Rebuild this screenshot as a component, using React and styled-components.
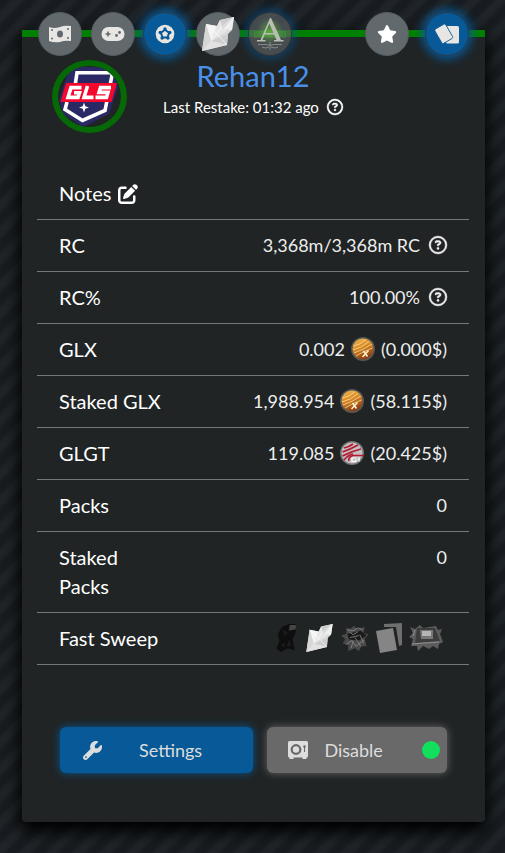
import styled, { createGlobalStyle, css } from 'styled-components'
import {
  FaWrench,
  FaStar,
  FaPenToSquare,
  FaRegCircleQuestion,
} from 'react-icons/fa6'

const GlobalStyle = createGlobalStyle`
  * {
    box-sizing: border-box;
  }

  body {
    margin: 0;
    min-height: 100vh;
    font-family: Lato, 'Liberation Sans', sans-serif;
    color: #ffffff;
    background: repeating-linear-gradient(
      135deg,
      #181c20 0px,
      #181c20 6px,
      #1f2428 10px,
      #1f2428 15px,
      #181c20 19px
    );
  }
`

const Page = styled.main`
  padding: 30px 20px 31px 22px;
`

const Card = styled.section`
  padding: 0 16px 49px 15px;
  border-top: 7px solid #008000;
  border-radius: 0 0 4px 4px;
  background: #202425;
  box-shadow: 0 8px 16px 2px #000000;
`

const Toolbar = styled.nav`
  display: flex;
  justify-content: space-between;
  margin-top: -25px;
  padding-left: 1px;
`

const ToolGroup = styled.div`
  display: flex;
  justify-content: space-between;
  gap: 8px;
  width: ${({ $width }) => $width};
`

const RoundButton = styled.button`
  display: grid;
  place-items: center;
  width: 44px;
  height: 44px;
  padding: 0;
  border: 1px solid #555c60;
  border-radius: 50%;
  background: #62696d;
  color: #ffffff;

  ${({ $active }) =>
    $active &&
    css`
      border-color: #2b3c4c;
      background: #075997;
      box-shadow: 0 0 10px 3px #075997;
    `}

  ${({ $faded }) =>
    $faded &&
    css`
      border-color: #30383c;
      background: rgba(98, 105, 109, 0.6);
      box-shadow: 0 0 10px 3px rgba(7, 89, 151, 0.6);
    `}
`

const Header = styled.header`
  display: grid;
  grid-template-columns: 1fr auto 1fr;
  margin-top: 4px;
  padding-bottom: 35px;
`

const Avatar = styled.div`
  width: 75px;
  height: 73px;
  margin-left: 15px;
  border: 6px solid #056a05;
  border-radius: 50%;
  overflow: hidden;

  svg {
    display: block;
  }
`

const Profile = styled.div`
  text-align: center;
`

const UserName = styled.h1`
  margin: 0;
  font-size: 29px;
  font-weight: 400;
  line-height: 32px;
  color: #4a90e9;
`

const Restake = styled.p`
  display: flex;
  align-items: center;
  gap: 8px;
  margin: 5px 0 0;
  font-size: 15px;
  line-height: 20px;
`

const HelpIcon = styled(FaRegCircleQuestion)`
  stroke: currentColor;
  stroke-width: 12px;
  overflow: visible;
`

const Stats = styled.table`
  width: 100%;
  border-collapse: separate;
  border-spacing: 0;
  font-size: 20px;
  line-height: 29px;
`

const Label = styled.th`
  width: 128px;
  padding: 11px 0 11px 22px;
  border-bottom: 1px solid #737879;
  font-weight: 400;
  text-align: left;
  vertical-align: top;
`

const Value = styled.td`
  padding: 11px 22px 11px 0;
  border-bottom: 1px solid #737879;
  color: #eeeeee;
  font-size: 18px;
  vertical-align: top;
`

const ValueLine = styled.div`
  display: flex;
  align-items: center;
  justify-content: flex-end;
  gap: ${({ $gap }) => $gap || '5px'};
  height: 28px;
`

const NotesLine = styled.div`
  display: flex;
  align-items: center;
  gap: 7px;
`

const IconButton = styled.button`
  display: flex;
  padding: 0;
  border: 0;
  background: none;
  color: inherit;
`

const SweepItems = styled.div`
  display: flex;
  align-items: center;
  justify-content: space-between;
  width: 168px;
  height: 28px;
  margin: 0 4px 0 auto;
`

const Actions = styled.footer`
  display: grid;
  grid-template-columns: 194fr 180fr;
  gap: 14px;
  margin-top: 62px;
  padding: 0 22px 0 23px;
`

const ActionButton = styled.button`
  display: grid;
  grid-template-columns: ${({ $columns }) => $columns};
  align-items: center;
  height: 46px;
  padding: 0 7px 0 ${({ $indent }) => $indent};
  border: 0;
  border-radius: 6px;
  background: ${({ $color }) => $color};
  box-shadow: 0 0 8px ${({ $color }) => $color};
  color: #dddddd;
  font-family: inherit;
  font-size: 18px;
  text-align: left;
`

const Status = styled.span`
  width: 18px;
  height: 18px;
  border-radius: 50%;
  background: #12df5c;
`

const CashIcon = () => (
  <svg width="22" height="18" viewBox="0 0 22 18">
    <path d="M0 2Q5 4 11 2Q16 0 22 1V16Q16 15 11 17Q5 18 0 16Z" fill="#e8e6e3" />
    <ellipse cx="11" cy="9" rx="3" ry="3.6" fill="#62696d" />
    <g fill="#62696d">
      <circle cx="3" cy="5" r="1" />
      <circle cx="3" cy="13.5" r="1" />
      <circle cx="19" cy="4" r="1" />
      <circle cx="19" cy="13" r="1" />
    </g>
  </svg>
)

const GamepadIcon = () => (
  <svg width="24" height="16" viewBox="0 0 24 16">
    <rect x="0.5" y="1" width="23" height="14" rx="7" fill="#e8e6e3" />
    <path d="M7 5.5v5M4.5 8h5" stroke="#62696d" strokeWidth="1.6" />
    <circle cx="15.5" cy="9.5" r="1.4" fill="#62696d" />
    <circle cx="18.5" cy="6.5" r="1.4" fill="#62696d" />
  </svg>
)

const BallIcon = () => (
  <svg width="20" height="20" viewBox="0 0 20 20">
    <circle cx="10" cy="10" r="9.3" fill="#e8e6e3" />
    <path
      d="M10 5.7l4.1 3-1.6 4.800H7.500L5.900 8.700Z"
      fill="#e8e6e3"
      stroke="#075997"
      strokeWidth="2"
      strokeLinejoin="round"
    />
    <g fill="#075997">
      <circle cx="10" cy="5" r="1.7" />
      <circle cx="14.8" cy="8.500" r="1.7" />
      <circle cx="12.9" cy="14" r="1.7" />
      <circle cx="7.1" cy="14" r="1.7" />
      <circle cx="5.2" cy="8.500" r="1.7" />
    </g>
  </svg>
)

const ShardIcon = ({ width, height }) => (
  <svg width={width} height={height} viewBox="0 0 32 34">
    <path d="M0 34L4 7 15 9 18 3 32 0 30 13 26 17 25 28Z" fill="#dadada" />
    <path d="M4 7L15 9 9 24Z" fill="#f4f4f4" />
    <path d="M15 9L9 24 25 14 18 3Z" fill="#e6e6e6" />
    <path d="M18 3L32 0 21 12Z" fill="#cdcdcd" />
    <path d="M32 0L30 13 21 12Z" fill="#efefef" />
    <path d="M9 24L26 17 25 28Z" fill="#cecece" />
    <path d="M0 34L9 24 25 28Z" fill="#e2e2e2" />
    <path d="M0 34L4 7 9 24Z" fill="#d6d6d6" />
    <path d="M9 24L18 12 32 0M4 7L15 17 25 28" fill="none" stroke="#ffffff" strokeWidth="0.7" />
  </svg>
)

// Emblem of the land section: a serif peak above a small compass
const EmblemIcon = () => (
  <svg width="32" height="34" viewBox="0 0 32 34">
    <defs>
      <radialGradient id="emblem">
        <stop offset="0" stopColor="#62b43c" stopOpacity="0.8" />
        <stop offset="1" stopColor="#62b43c" stopOpacity="0" />
      </radialGradient>
    </defs>
    <path d="M0 14h32v7H0Z" fill="#4c9a3e" opacity="0.35" />
    <circle cx="16" cy="14" r="13" fill="url(#emblem)" />
    <g fill="#b9beb5">
      <path d="M16 1L17 1 27 23H29.500V24.500H20V23H22.500L15.300 6.500 8.500 23H11.500V24.500H3V23H6.500Z" />
      <path d="M11 16h9v1.500h-9Z" />
    </g>
    <path
      d="M4 27.500h9M19 27.500h9M16 25v8M13 28h6M8 30q4 2 7 0M17 30q4 2 7 0"
      fill="none"
      stroke="#a9afa9"
      strokeWidth="0.9"
      opacity="0.7"
    />
  </svg>
)

const CardsIcon = () => (
  <svg width="26" height="22" viewBox="0 0 26 22">
    <rect x="12" y="3" width="13" height="17.5" rx="1.5" fill="#e8e6e3" />
    <rect
      x="3.5"
      y="2.5"
      width="12.5"
      height="16.5"
      rx="1.5"
      transform="rotate(-30 9.75 10.75)"
      fill="#e8e6e3"
      stroke="#075997"
      strokeWidth="0.8"
    />
  </svg>
)

const GuildLogo = () => (
  <svg width="63" height="61" viewBox="0 0 63 61">
    <path d="M12 1L56 1 60 22 51 48 25 61 5 48 1 34Z" fill="#2b2866" />
    <path
      d="M17 20L19 6.800H54.500L47 44.500 24.500 54.500 7 43.500 9 36"
      fill="none"
      stroke="#ffffff"
      strokeWidth="3.600"
    />
    <path d="M8 17H59L53.500 36H2.500Z" fill="#f5082d" />
    <g fill="none" stroke="#ffffff" strokeWidth="3.600">
      <path d="M23.500 21.600H13L10 31.400H20L21.500 26.800H16" />
      <path d="M29.500 20L26 31.400H35.500" />
      <path d="M53 21.600H42.500L41 26.400H50L48.500 31.400H37.500" />
    </g>
    <path d="M26 36.500l1.300 3.700 3.700 1.300-3.700 1.300-1.300 3.700-1.300-3.700-3.700-1.300 3.700-1.300Z" fill="#ffffff" />
  </svg>
)

const GlxCoin = () => (
  <svg width="26" height="26" viewBox="0 0 26 26">
    <defs>
      <linearGradient id="gold" x2="0.4" y2="1">
        <stop offset="0" stopColor="#f3bd55" />
        <stop offset="0.5" stopColor="#d98925" />
        <stop offset="1" stopColor="#8c3f13" />
      </linearGradient>
    </defs>
    <circle cx="13" cy="13" r="12" fill="#6a6b68" opacity="0.75" />
    <circle cx="13" cy="13" r="10.500" fill="url(#gold)" />
    <g fill="none" stroke="#ffe2a0" strokeWidth="1" opacity="0.75">
      <path d="M3.500 10Q10 9 16 3.500M3 14Q12 12 19 5.500M4 17Q13 14 22 8M6 20Q12 16 22.500 12" />
    </g>
    <path d="M13.500 15l4 5.500M18.500 14.500l-6 6.500" stroke="#fff0c8" strokeWidth="1.600" />
  </svg>
)

const GlgtCoin = () => (
  <svg width="26" height="26" viewBox="0 0 26 26">
    <circle cx="13" cy="13" r="12" fill="#747678" />
    <circle cx="13" cy="13" r="10.500" fill="#c3bfc2" />
    <g fill="none" stroke="#b5192f" strokeWidth="1.700">
      <path d="M5 8Q10 7 14 4M3.500 12Q12 9 19 5M3.500 16Q13 11 22 9M5 20Q9 15 14 14" />
      <path d="M10 21Q9 17 14 15.500h11" />
    </g>
    <path d="M17.500 18h-4.500v3.500h4v-2M20 17.500v4" fill="none" stroke="#ffffff" strokeWidth="1.200" />
  </svg>
)

const VaultIcon = () => (
  <svg width="22" height="20" viewBox="0 0 22 20">
    <path
      d="M2.500 1h17A1.500 1.500 0 0 1 21 2.500V16a1.500 1.500 0 0 1-1.500 1.500V19h-4v-1.500h-9V19h-4v-1.500A1.500 1.500 0 0 1 1 16V2.500A1.500 1.500 0 0 1 2.500 1Z"
      fill="#dddddd"
    />
    <circle cx="9" cy="9.500" r="4.300" fill="none" stroke="#696969" strokeWidth="2.200" />
    <circle cx="17.500" cy="6.500" r="1.300" fill="#696969" />
    <path d="M17.500 7v5" stroke="#696969" strokeWidth="1" />
  </svg>
)

const CoalIcon = () => (
  <svg width="24" height="30" viewBox="0 0 24 32">
    <path d="M7 4L14 1H22L21 11 18 17 20 29 13 27 5 31 1 27 4 19 2 12Z" fill="#0e0e0e" />
    <path d="M15 2h7l-1 5-7 1Z" fill="#454545" />
    <path d="M8 7l5 3-4 4ZM14 18l3 6-5 1ZM5 24l4-3 1 5Z" fill="#1c1c1c" />
  </svg>
)

const OreIcon = () => (
  <svg width="28" height="27" viewBox="0 0 28 28">
    <path
      d="M5 3L9 4 13 1 16 4 24 2 23 8 28 10 24 14 26 22 21 22 18 27 14 24 7 27 7 21 1 19 4 15 0 11 5 9Z"
      fill="#4a4a4a"
    />
    <path d="M6 9L20 6 26 11 18 16 8 15Z" fill="#191919" />
    <path
      d="M6 5l6 1 5-3 5 2M8 7l4 3 5-3M5 20l6-4 4 6 8-6M10 24l2-7M19 10l4 9M14 13l6 9M9 13l9-2"
      fill="none"
      stroke="#858585"
      strokeWidth="0.900"
    />
  </svg>
)

const PackCardsIcon = () => (
  <svg width="26" height="30" viewBox="0 0 26 30">
    <path d="M8 1L26 0V22L23 23 20 4 8 4Z" fill="#6f6f6f" />
    <path d="M0 8L17 5 21 27 4 30Z" fill="#858585" />
  </svg>
)

const RelicIcon = () => (
  <svg width="34" height="28" viewBox="0 0 34 28">
    <path
      d="M1 3L6 5 11 1 14 4 27 2 29 6 33 5 31 10 34 18 30 20 29 25 24 22 20 25 14 22 9 27 8 22 2 22 4 15 0 13 4 9Z"
      fill="#5c5c5c"
    />
    <path d="M8 4L26 4 31 17 6 19Z" fill="#3c3c3c" />
    <path d="M11 6h13v9H12Z" fill="#777777" />
    <path d="M13 7h9v5h-9Z" fill="#b5b5b5" />
    <path d="M3 20l13-1 14-1M6 6l-2 6" stroke="#909090" strokeWidth="1" fill="none" />
  </svg>
)

const StatRow = ({ label, children, gap }) => {
  return (
    <tr>
      <Label scope="row">{label}</Label>
      <Value>
        <ValueLine $gap={gap}>{children}</ValueLine>
      </Value>
    </tr>
  )
}

const App = () => {
  return (
    <>
      <GlobalStyle />
      <Page>
        <Card>
          <Toolbar>
            <ToolGroup $width="254px">
              <RoundButton aria-label="Cash">
                <CashIcon />
              </RoundButton>
              <RoundButton aria-label="Games">
                <GamepadIcon />
              </RoundButton>
              <RoundButton aria-label="Football" $active>
                <BallIcon />
              </RoundButton>
              <RoundButton aria-label="Shards">
                <ShardIcon width="32" height="34" />
              </RoundButton>
              <RoundButton aria-label="Land" $faded>
                <EmblemIcon />
              </RoundButton>
            </ToolGroup>
            <ToolGroup $width="104px">
              <RoundButton aria-label="Favourite">
                <FaStar size={20} />
              </RoundButton>
              <RoundButton aria-label="Cards" $active>
                <CardsIcon />
              </RoundButton>
            </ToolGroup>
          </Toolbar>

          <Header>
            <Avatar>
              <GuildLogo />
            </Avatar>
            <Profile>
              <UserName>Rehan12</UserName>
              <Restake>
                Last Restake: 01:32 ago
                <HelpIcon size={16} />
              </Restake>
            </Profile>
          </Header>

          <Stats>
            <tbody>
              <tr>
                <Label scope="row" colSpan={2}>
                  <NotesLine>
                    Notes
                    <IconButton aria-label="Edit notes">
                      <FaPenToSquare size={20} />
                    </IconButton>
                  </NotesLine>
                </Label>
              </tr>
              <StatRow label="RC" gap="9px">
                3,368m/3,368m RC
                <HelpIcon size={18} />
              </StatRow>
              <StatRow label="RC%" gap="9px">
                100.00%
                <HelpIcon size={18} />
              </StatRow>
              <StatRow label="GLX">
                0.002
                <GlxCoin />
                (0.000$)
              </StatRow>
              <StatRow label="Staked GLX">
                1,988.954
                <GlxCoin />
                (58.115$)
              </StatRow>
              <StatRow label="GLGT">
                119.085
                <GlgtCoin />
                (20.425$)
              </StatRow>
              <StatRow label="Packs">0</StatRow>
              <StatRow label="Staked Packs">0</StatRow>
              <tr>
                <Label scope="row">Fast Sweep</Label>
                <Value>
                  <SweepItems>
                    <CoalIcon />
                    <ShardIcon width="27" height="28" />
                    <OreIcon />
                    <PackCardsIcon />
                    <RelicIcon />
                  </SweepItems>
                </Value>
              </tr>
            </tbody>
          </Stats>

          <Actions>
            <ActionButton $color="#075997" $columns="56px 1fr" $indent="23px">
              <FaWrench size={19} />
              Settings
            </ActionButton>
            <ActionButton $color="#696969" $columns="37px 1fr auto" $indent="20px">
              <VaultIcon />
              Disable
              <Status />
            </ActionButton>
          </Actions>
        </Card>
      </Page>
    </>
  )
}

export default App
